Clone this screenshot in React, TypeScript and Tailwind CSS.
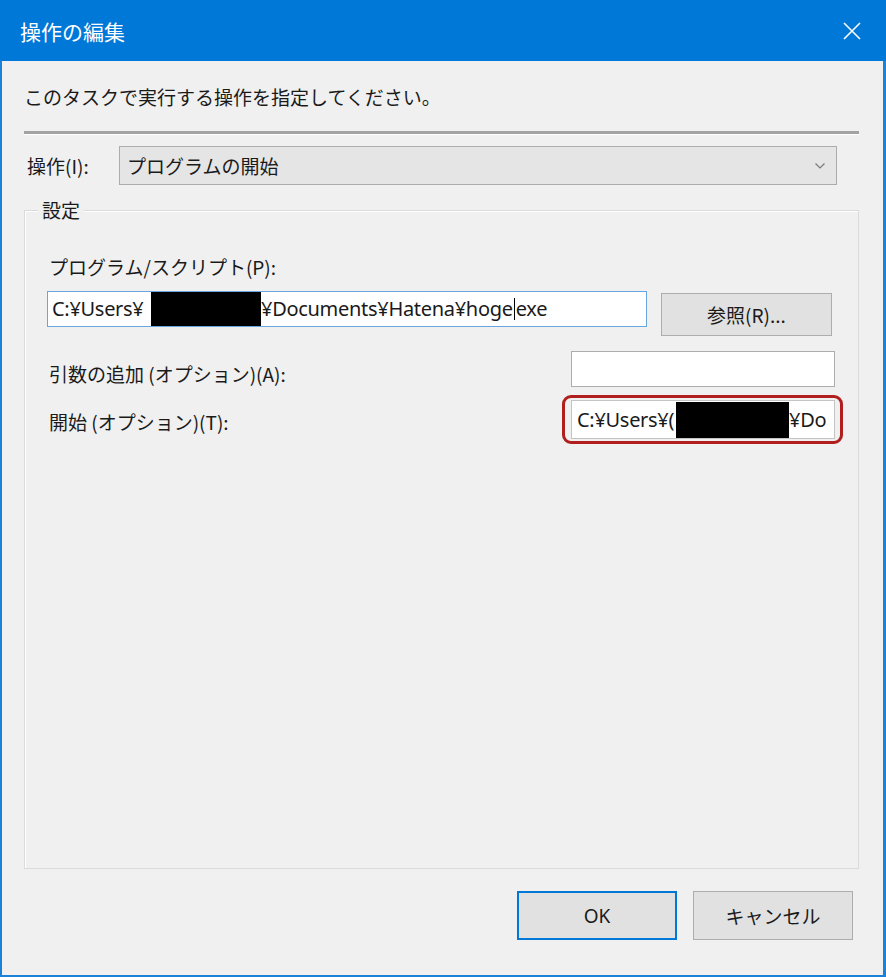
import React from "react";

const jp = "font-['Noto_Sans_CJK_JP',sans-serif]";
const latin = "font-['Noto_Sans','Noto_Sans_CJK_JP',sans-serif]";

function Redacted({ w }: { w: string }) {
  return <span className={`${w} self-stretch shrink-0 bg-black`} />;
}

export default function App() {
  return (
    <div className={`w-[886px] h-[977px] flex flex-col border-l-2 border-r-[3px] border-b-2 border-[#1a82d9] bg-[#f0f0f0] text-[#1a1a1a] ${jp}`}>
      {/* title bar */}
      <div className="h-[61px] shrink-0 -ml-[2px] -mr-[3px] bg-[#0078d7] flex items-center justify-between pl-[20px] pr-[25px]">
        <span className="text-white text-[21px] leading-[28px]">操作の編集</span>
        <svg width="18" height="18" viewBox="0 0 18 18" fill="none" stroke="white" strokeWidth="1.6">
          <path d="M1 1 L17 17 M17 1 L1 17" />
        </svg>
      </div>

      <div className="flex flex-col pl-[22px] pr-[24px]">
        <p className="mt-[22px] text-[19px] leading-[28px]">このタスクで実行する操作を指定してください。</p>

        <div className="mt-[20px] h-[4px] border-t-[3px] border-[#a3a3a3] border-b border-b-white" />

        {/* action combobox */}
        <div className="mt-[11px] flex items-center">
          <span className="w-[95px] pl-[3px] text-[19px] leading-[28px] shrink-0">操作(I):</span>
          <div className="w-[718px] h-[39px] bg-[#e5e5e5] border border-[#acacac] flex items-center justify-between pl-[7px] pr-[11px]">
            <span className="text-[19px] leading-[28px]">プログラムの開始</span>
            <svg width="10" height="6" viewBox="0 0 10 6" fill="none" stroke="#7a7a7a" strokeWidth="1.2">
              <path d="M0.5 0.5 L5 5 L9.5 0.5" />
            </svg>
          </div>
        </div>

        {/* settings group */}
        <div className="relative mt-[25px] h-[659px] border border-[#dadada] shadow-[inset_1px_1px_0_#ffffff]">
          <span className="absolute -top-[15px] left-[13px] px-[4px] bg-[#f0f0f0] text-[19px] leading-[28px]">設定</span>

          <div className="flex flex-col pl-[22px] pr-[23px] pt-[43px]">
            <span className="ml-[2px] text-[19px] leading-[26px]">プログラム/スクリプト(P):</span>

            <div className="mt-[11px] flex items-start gap-[14px]">
              <div className={`w-[600px] h-[36px] bg-white border border-[#6aa5e0] flex items-center pl-[4px] overflow-hidden whitespace-nowrap text-[20px] leading-[28px] tracking-[-0.3px] ${latin}`}>
                <span className="w-[99px] shrink-0 overflow-hidden">C:¥Users¥</span>
                <Redacted w="w-[110px]" />
                <span>¥Documents¥Hatena¥hoge</span>
                <span className="w-px h-[22px] bg-black mx-[1px]" />
                <span>exe</span>
              </div>
              <button className="mt-[2px] w-[171px] h-[43px] bg-[#e1e1e1] border border-[#adadad] text-[19px] leading-[28px]">
                参照(R)...
              </button>
            </div>

            <div className="mt-[15px] flex items-center justify-between">
              <span className="ml-[2px] pt-[9px] text-[19px] leading-[26px]">引数の追加 (オプション)(A):</span>
              <div className="w-[264px] h-[36px] bg-white border border-[#adadad]" />
            </div>

            <div className="mt-[13px] flex items-center justify-between">
              <span className="ml-[2px] pt-[4px] text-[19px] leading-[26px]">開始 (オプション)(T):</span>
              <div className="relative w-[264px] h-[39px]">
                <div className={`w-full h-full bg-white border border-[#c4c4c4] flex items-center pl-[5px] overflow-hidden whitespace-nowrap text-[20px] leading-[28px] tracking-[-0.3px] ${latin}`}>
                  <span className="w-[99px] shrink-0 overflow-hidden">C:¥Users¥(</span>
                  <span className="w-[113px] h-[36px] shrink-0 bg-black" />
                  <span>¥Do</span>
                </div>
                <span className="pointer-events-none absolute -left-[9px] -right-[8px] -top-[5px] -bottom-[5px] rounded-[9px] border-[3px] border-[#b01e1e]" />
              </div>
            </div>
          </div>
        </div>

        {/* buttons */}
        <div className="mt-[22px] flex justify-end gap-[16px] pr-[6px]">
          <button className={`w-[160px] h-[49px] bg-[#e1e1e1] border-2 border-[#0078d7] text-[19px] leading-[28px] ${latin}`}>OK</button>
          <button className="w-[160px] h-[49px] bg-[#e1e1e1] border border-[#adadad] text-[19px] leading-[28px]">キャンセル</button>
        </div>
      </div>
    </div>
  );
}
